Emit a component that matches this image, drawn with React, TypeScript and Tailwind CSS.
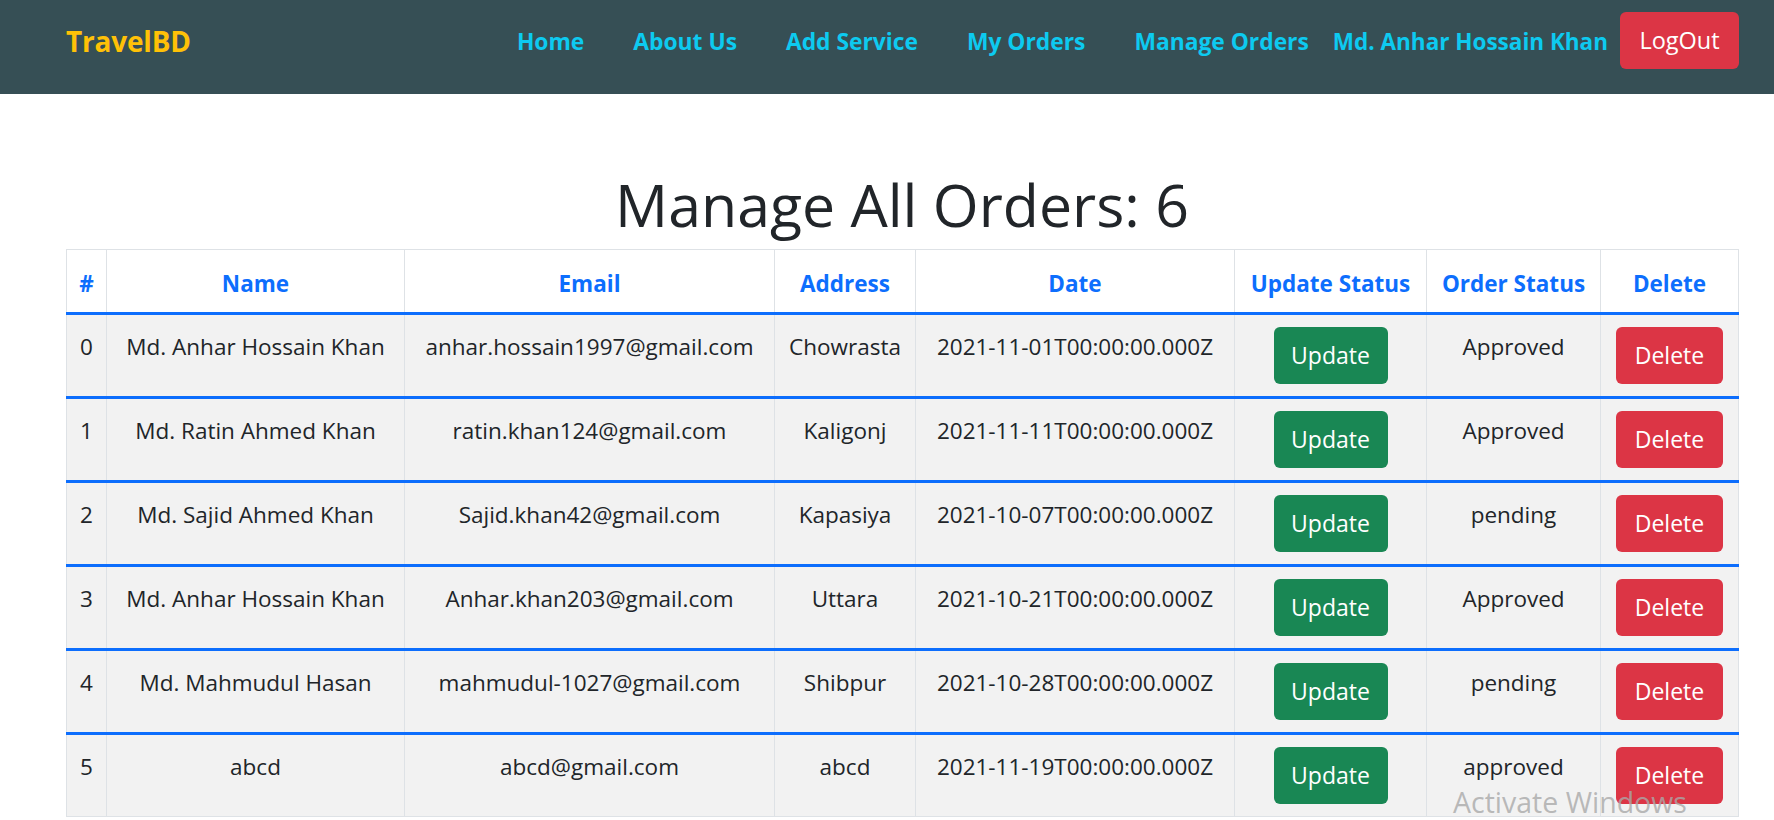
import React from 'react';

type Order = {
  name: string;
  email: string;
  address: string;
  date: string;
  status: string;
};

const orders: Order[] = [
  { name: 'Md. Anhar Hossain Khan', email: 'anhar.hossain1997@gmail.com', address: 'Chowrasta', date: '2021-11-01T00:00:00.000Z', status: 'Approved' },
  { name: 'Md. Ratin Ahmed Khan', email: 'ratin.khan124@gmail.com', address: 'Kaligonj', date: '2021-11-11T00:00:00.000Z', status: 'Approved' },
  { name: 'Md. Sajid Ahmed Khan', email: 'Sajid.khan42@gmail.com', address: 'Kapasiya', date: '2021-10-07T00:00:00.000Z', status: 'pending' },
  { name: 'Md. Anhar Hossain Khan', email: 'Anhar.khan203@gmail.com', address: 'Uttara', date: '2021-10-21T00:00:00.000Z', status: 'Approved' },
  { name: 'Md. Mahmudul Hasan', email: 'mahmudul-1027@gmail.com', address: 'Shibpur', date: '2021-10-28T00:00:00.000Z', status: 'pending' },
  { name: 'abcd', email: 'abcd@gmail.com', address: 'abcd', date: '2021-11-19T00:00:00.000Z', status: 'approved' },
];

const navLinks = ['Home', 'About Us', 'Add Service', 'My Orders', 'Manage Orders'];

const headers = ['#', 'Name', 'Email', 'Address', 'Date', 'Update Status', 'Order Status', 'Delete'];

export default function App() {
  return (
    <div className="relative min-h-[820px] bg-white font-['Open_Sans',sans-serif] text-[#212529]">
      {/* Navbar */}
      <nav className="h-[94px] bg-[#364f55] pl-[66px] pr-[35px] pt-[12px] flex items-start">
        <span className="h-[57px] flex items-center text-[#ffc107] font-bold text-[28px] tracking-[-0.2px]">TravelBD</span>
        <div className="ml-auto flex items-center">
          <div className="flex items-center gap-[49px] mt-[3px]">
            {navLinks.map((link) => (
              <a key={link} className="text-[#0dcaf0] font-bold text-[22.8px] cursor-pointer">
                {link}
              </a>
            ))}
          </div>
          <span className="ml-[24px] mt-[3px] text-[#0dcaf0] font-bold text-[22.5px]">
            Md. Anhar Hossain Khan
          </span>
          <button className="ml-[12px] w-[119px] h-[57px] rounded-[6px] bg-[#dc3545] text-white text-[23.5px]">
            LogOut
          </button>
        </div>
      </nav>

      {/* Content */}
      <div className="pl-[66px] pr-[36px]">
        <h1 className="mt-[74px] mb-[9px] text-center text-[59px] leading-[72px] font-medium text-[#212529]">
          Manage All Orders: {orders.length}
        </h1>

        <table className="w-full table-fixed border-collapse border border-[#dee2e6] text-center text-[22.5px]">
          <colgroup>
            <col className="w-[40px]" />
            <col className="w-[298px]" />
            <col className="w-[370px]" />
            <col className="w-[141px]" />
            <col className="w-[319px]" />
            <col className="w-[192px]" />
            <col className="w-[174px]" />
            <col className="w-[138px]" />
          </colgroup>
          <thead>
            <tr className="bg-white border-b-[3px] border-b-[#0d6efd]">
              {headers.map((h) => (
                <th key={h} className="border-x border-[#dee2e6] pt-[19px] pb-[13px] leading-[30px] font-bold text-[#0d6efd]">
                  {h}
                </th>
              ))}
            </tr>
          </thead>
          <tbody>
            {orders.map((order, i) => (
              <tr
                key={i}
                className={`bg-[#f2f2f2] ${i < orders.length - 1 ? 'border-b-[3px] border-b-[#0d6efd]' : ''}`}
              >
                <td className="border-x border-[#dee2e6] align-top pt-[17px] leading-[30px]">{i}</td>
                <td className="border-x border-[#dee2e6] align-top pt-[17px] leading-[30px]">{order.name}</td>
                <td className="border-x border-[#dee2e6] align-top pt-[17px] leading-[30px]">{order.email}</td>
                <td className="border-x border-[#dee2e6] align-top pt-[17px] leading-[30px]">{order.address}</td>
                <td className="border-x border-[#dee2e6] align-top pt-[17px] leading-[30px]">{order.date}</td>
                <td className="border-x border-[#dee2e6] align-top pt-[12px] pb-[12px]">
                  <button className="w-[114px] h-[57px] rounded-[6px] bg-[#198754] text-white text-[23px] mx-auto block">
                    Update
                  </button>
                </td>
                <td className="border-x border-[#dee2e6] align-top pt-[17px] leading-[30px]">{order.status}</td>
                <td className="border-x border-[#dee2e6] align-top pt-[12px] pb-[12px]">
                  <button className="w-[107px] h-[57px] rounded-[6px] bg-[#dc3545] text-white text-[23px] mx-auto block">
                    Delete
                  </button>
                </td>
              </tr>
            ))}
          </tbody>
        </table>
      </div>

      {/* Windows activation watermark */}
      <div className="absolute left-[1453px] top-[781px] text-[28.5px] text-[#a9a9a9]/80 pointer-events-none">
        Activate Windows
      </div>
    </div>
  );
}
